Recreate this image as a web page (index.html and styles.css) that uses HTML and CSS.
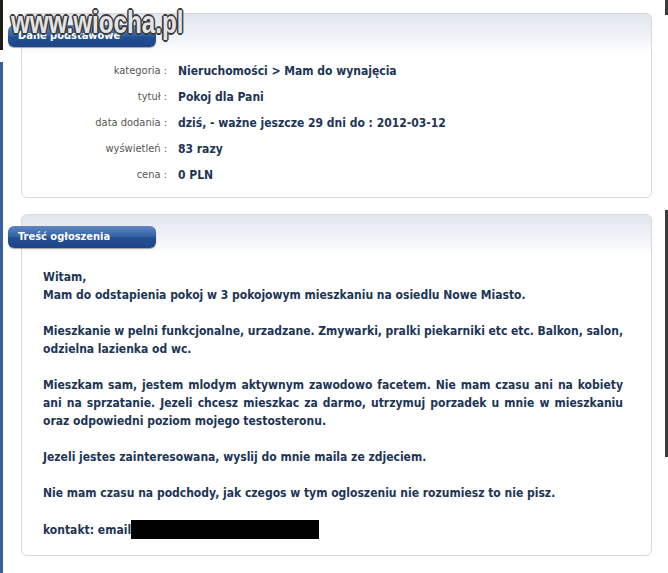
FILE: index.html
```html
<!DOCTYPE html>
<html lang="pl">
  <head>
    <meta charset="UTF-8" />
    <title>Pokoj dla Pani</title>
    <link rel="stylesheet" href="styles.css">
  </head>
  <body>
    <div class="page">
      <div class="edge-left">
        <div class="edge-dark"></div>
        <div class="edge-blue"></div>
      </div>

      <div class="main">
        <div class="box">
          <div class="tab">Dane podstawowe</div>
          <div class="details">
            <div class="label">kategoria :</div>
            <div class="value">Nieruchomości &gt; Mam do wynajęcia</div>
            <div class="label">tytuł :</div>
            <div class="value">Pokoj dla Pani</div>
            <div class="label">data dodania :</div>
            <div class="value">dziś, - ważne jeszcze 29 dni do : 2012-03-12</div>
            <div class="label">wyświetleń :</div>
            <div class="value">83 razy</div>
            <div class="label">cena :</div>
            <div class="value">0 PLN</div>
          </div>
        </div>

        <div class="box">
          <div class="tab">Treść ogłoszenia</div>
          <div class="msg">
            <p>Witam,<br>Mam do odstapienia pokoj w 3 pokojowym mieszkaniu na osiedlu Nowe Miasto.</p>
            <p>
              <span class="just">Mieszkanie w pelni funkcjonalne, urzadzane. Zmywarki, pralki piekarniki etc etc. Balkon, salon,</span>
              odzielna lazienka od wc.
            </p>
            <p>
              <span class="just">Mieszkam sam, jestem mlodym aktywnym zawodowo facetem. Nie mam czasu ani na kobiety</span>
              <span class="just">ani na sprzatanie. Jezeli chcesz mieszkac za darmo, utrzymuj porzadek u mnie w mieszkaniu</span>
              oraz odpowiedni poziom mojego testosteronu.
            </p>
            <p>Jezeli jestes zainteresowana, wyslij do mnie maila ze zdjeciem.</p>
            <p>Nie mam czasu na podchody, jak czegos w tym ogloszeniu nie rozumiesz to nie pisz.</p>
            <p>kontakt: email<span class="redact"></span></p>
          </div>
        </div>
      </div>

      <div class="edge-right">
        <div class="edge-top"></div>
        <div class="edge-mid"></div>
      </div>

      <div class="watermark">www.wiocha.pl</div>
    </div>
  </body>
</html>
```

FILE: styles.css
```css
body {
  margin: 0;
  background-color: #fff;
  font-family: "DejaVu Sans Condensed", "DejaVu Sans", sans-serif;
}

.page {
  position: relative;
  display: flex;
  width: 668px;
  height: 573px;
  overflow: hidden;
}

.edge-left {
  width: 3px;
  display: flex;
  flex-direction: column;
}
.edge-dark {
  height: 50px;
  background-color: #1d1d14;
}
.edge-blue {
  flex: 1;
  margin-top: 12px;
  background-color: #3561a0;
}

.edge-right {
  width: 3px;
  display: flex;
  flex-direction: column;
}
.edge-top {
  height: 15px;
  background-color: #3a3a3a;
}
.edge-mid {
  height: 247px;
  margin-top: 195px;
  background-color: #3a3a3a;
}

.main {
  flex: 1;
  padding: 13px 13px 0 18px;
}

.box {
  width: 629px;
  margin-bottom: 16px;
  border: 1px solid #d9d9d9;
  border-radius: 6px;
  background: linear-gradient(#e1e5ef, #fff 42px);
}

.tab {
  width: 138px;
  height: 22px;
  margin: 11px 0 0 -14px;
  padding-left: 10px;
  box-sizing: content-box;
  border-radius: 6px;
  background: linear-gradient(#5f86bf, #3565a8 45%, #234f92 55%, #1d4588);
  box-shadow: 0 1px 1px rgba(0, 0, 0, 0.35);
  color: #fff;
  font-size: 11px;
  font-weight: bold;
  line-height: 22px;
}

.details {
  display: grid;
  grid-template-columns: 145px 1fr;
  column-gap: 11px;
  padding: 11px 0 9px;
}
.label {
  text-align: right;
  color: #555;
  font-size: 11px;
  line-height: 26px;
}
.value {
  color: #1d3555;
  font-size: 12px;
  font-weight: bold;
  line-height: 26px;
}

.msg {
  width: 580px;
  padding: 20px 0 16px 21px;
  color: #1d3555;
  font-size: 12px;
  font-weight: bold;
  line-height: 18px;
}
.msg p {
  margin: 0 0 18px;
}
.msg p:last-child {
  margin-bottom: 0;
}
.just {
  display: block;
  white-space: nowrap;
  word-spacing: -2px;
  text-align: justify;
  text-align-last: justify;
}
.redact {
  display: inline-block;
  width: 188px;
  height: 19px;
  vertical-align: -5px;
  background-color: #000;
}

.watermark {
  position: absolute;
  left: 11px;
  top: 5px;
  font-family: "Liberation Sans", Arial, sans-serif;
  font-size: 31px;
  font-weight: bold;
  color: #e4e4e4;
  transform: scaleX(0.78);
  transform-origin: left top;
  text-shadow: -2px 0 #3b3b3b, 2px 0 #3b3b3b, 0 -2px #3b3b3b, 0 2px #3b3b3b,
    -1px -1px #3b3b3b, 1px 1px #3b3b3b, -1px 1px #3b3b3b, 1px -1px #3b3b3b;
}
```
